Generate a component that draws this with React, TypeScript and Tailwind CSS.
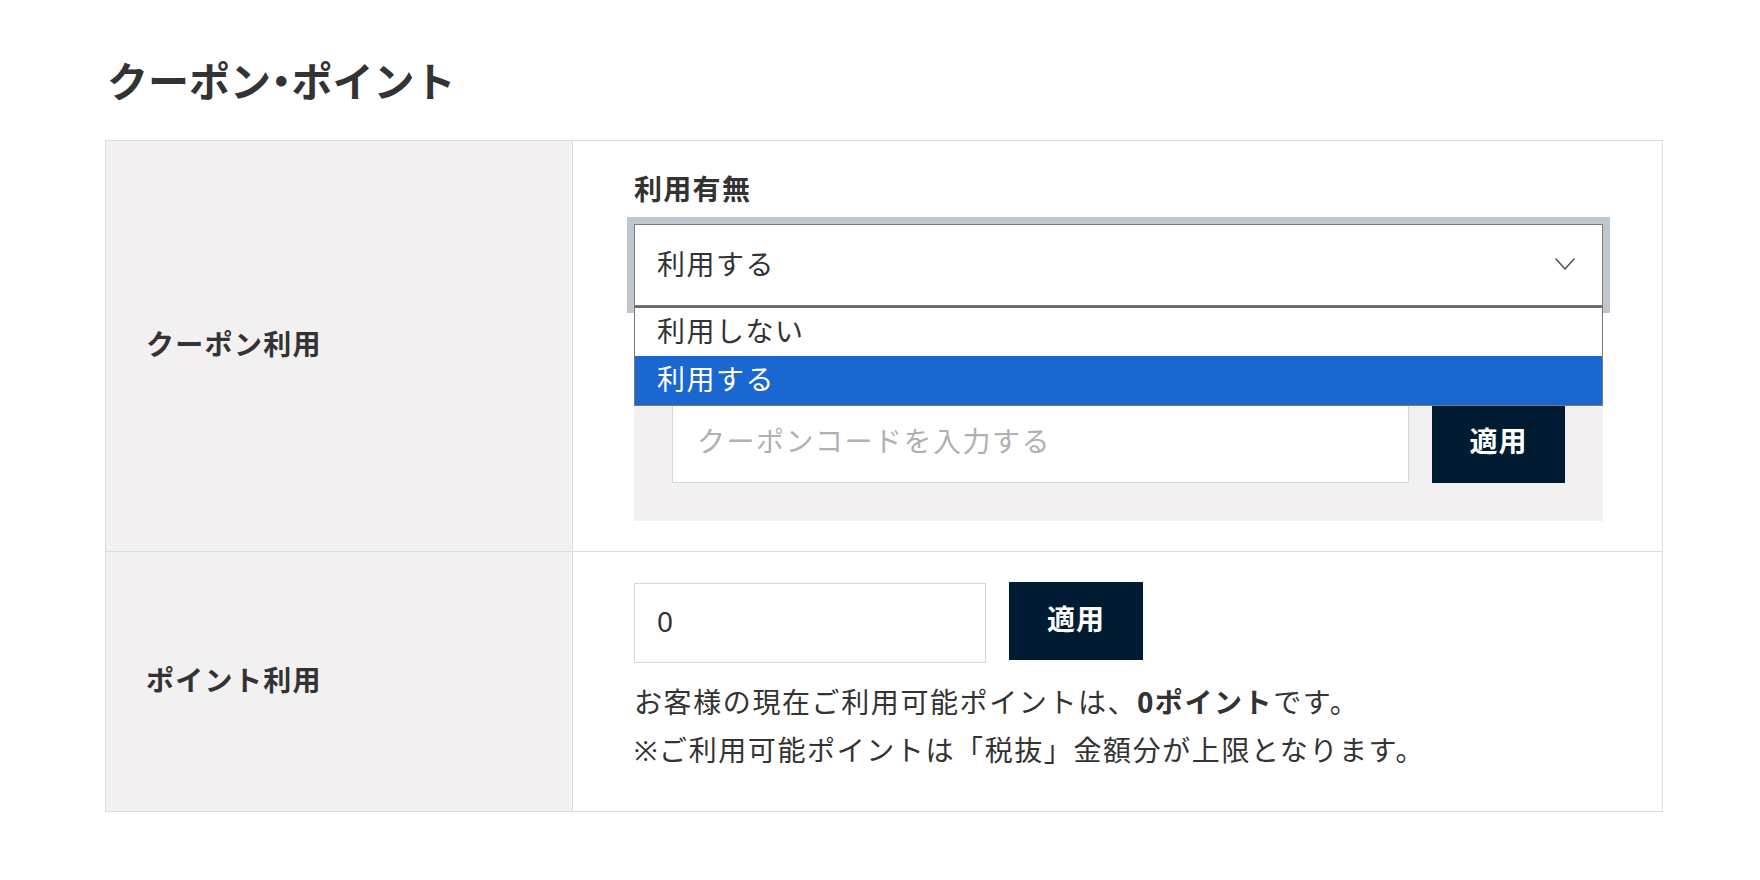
import React from "react";

const FONT = { fontFamily: '"Noto Sans", "Noto Sans CJK JP", sans-serif' };

function Chevron() {
  return (
    <svg width="22" height="14" viewBox="0 0 22 14" fill="none">
      <polyline points="2,2 11,12 20,2" stroke="#555" strokeWidth="1.6" strokeLinecap="round" strokeLinejoin="round" />
    </svg>
  );
}

export default function App() {
  return (
    <div className="min-h-[880px] w-[1760px] bg-white text-[#333]" style={FONT}>
      <div className="pl-[105px] pr-[97px] pt-[57px] pb-[68px]">
        <h2 className="text-[41px] font-bold leading-[48px] text-[#333] pl-[2px]">
          クーポン<span className="[font-feature-settings:'palt']">・</span>ポイント
        </h2>
        <div className="mt-[35px] border border-[#dcdcdc]">
          {/* Row 1 */}
          <div className="flex border-b border-[#dcdcdc]">
            <div className="w-[467px] shrink-0 bg-[#f2f0f0] border-r border-[#dcdcdc] flex items-center pl-[40px] pb-[4px]">
              <span className="text-[28px] font-bold tracking-[1.3px]">クーポン利用</span>
            </div>
            <div className="flex-1 pl-[61px] pr-[59px] pt-[27px] pb-[30px]">
              <div className="text-[28px] font-bold leading-[42px] tracking-[1.3px]">利用有無</div>
              <div className="relative mt-[14px]">
                <div className="h-[82px] border border-[#7a7a7a] bg-white flex items-center justify-between pl-[22px] pr-[26px] pb-[3px] shadow-[0_0_0_7px_#bfc6cd]">
                  <span className="text-[28px] tracking-[1.5px]">利用する</span>
                  <Chevron />
                </div>
                <div className="absolute left-0 right-0 top-full z-10 bg-white border-x border-b border-[#7a7a7a] border-t-2 border-t-[#6a6a6a]">
                  <div className="h-[48px] flex items-center pl-[22px] pb-[3px] text-[28px] tracking-[1.5px]">利用しない</div>
                  <div className="h-[49px] flex items-center pl-[22px] pb-[4px] text-[28px] tracking-[1.5px] bg-[#1a67d2] text-white">利用する</div>
                </div>
              </div>
              <div className="mt-[59px] bg-[#f2f0f0] p-[38px] flex items-start gap-[23px]">
                <div className="flex-1 h-[80px] bg-white border border-[#d6d6d6] flex items-center pl-[24px] pb-[4px] text-[28px] tracking-[1.5px] text-[#b0b0b0]">
                  クーポンコードを入力する
                </div>
                <button className="w-[133px] h-[80px] bg-[#001c33] text-white text-[28px] font-bold tracking-[1px] pb-[4px]">適用</button>
              </div>
            </div>
          </div>
          {/* Row 2 */}
          <div className="flex">
            <div className="w-[467px] shrink-0 bg-[#f2f0f0] border-r border-[#dcdcdc] flex items-center pl-[40px] pb-[4px]">
              <span className="text-[28px] font-bold tracking-[1.3px]">ポイント利用</span>
            </div>
            <div className="flex-1 pl-[61px] pr-[59px] pt-[30px] pb-[37px]">
              <div className="flex items-start gap-[23px]">
                <div className="mt-[1px] w-[352px] h-[80px] bg-white border border-[#d6d6d6] flex items-center pl-[22px] pb-[5px] text-[28px]">0</div>
                <button className="w-[134px] h-[78px] bg-[#001c33] text-white text-[28px] font-bold tracking-[1px] pb-[4px]">適用</button>
              </div>
              <p className="mt-[15px] text-[28px] leading-[48px] tracking-[1.6px]">
                お客様の現在ご利用可能ポイントは、<span className="font-bold">0ポイント</span>です。
              </p>
              <p className="text-[28px] leading-[48px] tracking-[1.6px]">※ご利用可能ポイントは「税抜」金額分が上限となります。</p>
            </div>
          </div>
        </div>
      </div>
    </div>
  );
}
